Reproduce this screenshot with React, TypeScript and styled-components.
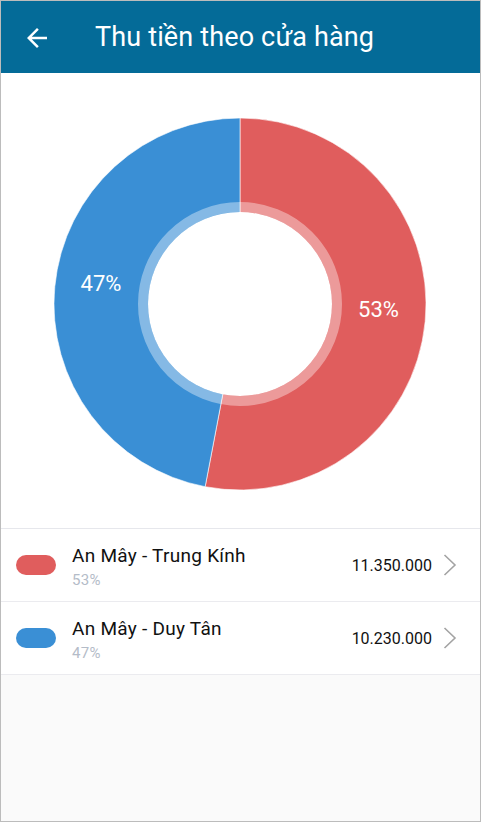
import React from 'react';
import styled, {createGlobalStyle} from 'styled-components';

const GlobalStyle = createGlobalStyle`
    html, body {
        margin: 0;
        padding: 0;
        background: #fff;
    }
    body {
        font-family: Roboto, "Noto Sans", "Liberation Sans", sans-serif;
    }
`;

interface IStore {
    name: string,
    percent: number,
    amount: string,
    color: string,
}

const stores: IStore[] = [
    {name: 'An Mây - Trung Kính', percent: 53, amount: '11.350.000', color: '#e05d5d'},
    {name: 'An Mây - Duy Tân', percent: 47, amount: '10.230.000', color: '#3a8fd5'},
];

const CX = 186;
const CY = 186;
const R = 186;

/**
 * 扇形 path
 */
const slicePath = (from: number, to: number) => {
    const a0 = from * Math.PI * 2;
    const a1 = to * Math.PI * 2;
    const x0 = CX + R * Math.sin(a0);
    const y0 = CY - R * Math.cos(a0);
    const x1 = CX + R * Math.sin(a1);
    const y1 = CY - R * Math.cos(a1);
    const large = to - from > 0.5 ? 1 : 0;
    return `M${CX} ${CY} L${x0} ${y0} A${R} ${R} 0 ${large} 1 ${x1} ${y1} Z`;
};

const Donut = () => {
    let start = 0;
    return <ChartSvg width={372} height={372} viewBox="0 0 372 372">
        {stores.map(store => {
            const end = start + store.percent / 100;
            const d = slicePath(start, end);
            start = end;
            return <path key={store.name} d={d} fill={store.color} stroke="#fff" strokeWidth={0.6}/>;
        })}
        <circle cx={CX} cy={CY} r={97} fill="none" stroke="#fff" strokeOpacity={0.38} strokeWidth={10}/>
        <circle cx={CX} cy={CY} r={92} fill="#fff"/>
        <ChartLabel x={47} y={172.7}>47%</ChartLabel>
        <ChartLabel x={324.5} y={199.3}>53%</ChartLabel>
    </ChartSvg>;
};

const App = () => {
    return <>
        <GlobalStyle/>
        <Frame>
            <Header>
                <BackButton>
                    <svg width={30} height={30} viewBox="0 0 24 24">
                        <path d="M20 11H7.83l5.59-5.59L12 4l-8 8 8 8 1.41-1.41L7.83 13H20v-2z" fill="#fff"/>
                    </svg>
                </BackButton>
                <Title>Thu tiền theo cửa hàng</Title>
            </Header>

            <ChartArea>
                <Donut/>
            </ChartArea>

            <List>
                {stores.map(store => (
                    <Row key={store.name}>
                        <Pill $color={store.color}/>
                        <Info>
                            <StoreName>{store.name}</StoreName>
                            <Percent>{store.percent}%</Percent>
                        </Info>
                        <Amount>{store.amount}</Amount>
                        <svg width={14} height={22} viewBox="0 0 14 22">
                            <polyline points="1.5,1 12,11 1.5,21" fill="none" stroke="#a3a3a3" strokeWidth={1.6}/>
                        </svg>
                    </Row>
                ))}
            </List>
        </Frame>
    </>;
};

export default App;



const Frame = styled.div`
    width: 481px;
    height: 822px;
    box-sizing: border-box;
    border: 1px solid #bcbcbc;
    background: #fafafa;
    display: flex;
    flex-direction: column;
    overflow: hidden;
`;

const Header = styled.header`
    height: 72px;
    flex-shrink: 0;
    background: #046b98;
    display: flex;
    align-items: center;
    padding-left: 21px;
`;

const BackButton = styled.div`
    width: 30px;
    height: 30px;
    display: flex;
    align-items: center;
    justify-content: center;
    margin-top: 1px;
`;

const Title = styled.h1`
    margin: 0 0 0 43px;
    color: #fff;
    font-size: 27px;
    font-weight: 400;
    letter-spacing: 0.15px;
`;

const ChartArea = styled.div`
    background: #fff;
    display: flex;
    justify-content: center;
    padding: 45px 0 38px;
`;

const ChartSvg = styled.svg`
    display: block;
    margin-left: -2px;
`;

const ChartLabel = styled.text`
    fill: #fff;
    font-family: Roboto, "Liberation Sans", sans-serif;
    font-size: 22px;
    text-anchor: middle;
`;

const List = styled.div`
    background: #fff;
    border-top: 1px solid #e6e7ec;
`;

const Row = styled.div`
    height: 72px;
    border-bottom: 1px solid #ebebef;
    display: flex;
    align-items: center;
    padding: 0 23px 0 15px;
`;

const Pill = styled.span<{$color: string}>`
    width: 40px;
    height: 20px;
    border-radius: 10px;
    background: ${props => props.$color};
    flex-shrink: 0;
`;

const Info = styled.div`
    flex: 1;
    margin-left: 16px;
    padding-top: 4px;
    display: flex;
    flex-direction: column;
`;

const StoreName = styled.div`
    font-size: 19px;
    line-height: 22px;
    letter-spacing: 0.27px;
    color: #111;
`;

const Percent = styled.div`
    margin-top: 4px;
    font-size: 15px;
    line-height: 18px;
    letter-spacing: 0.3px;
    color: #b4bcc8;
`;

const Amount = styled.div`
    font-size: 16px;
    color: #111;
    margin-right: 11px;
`;
